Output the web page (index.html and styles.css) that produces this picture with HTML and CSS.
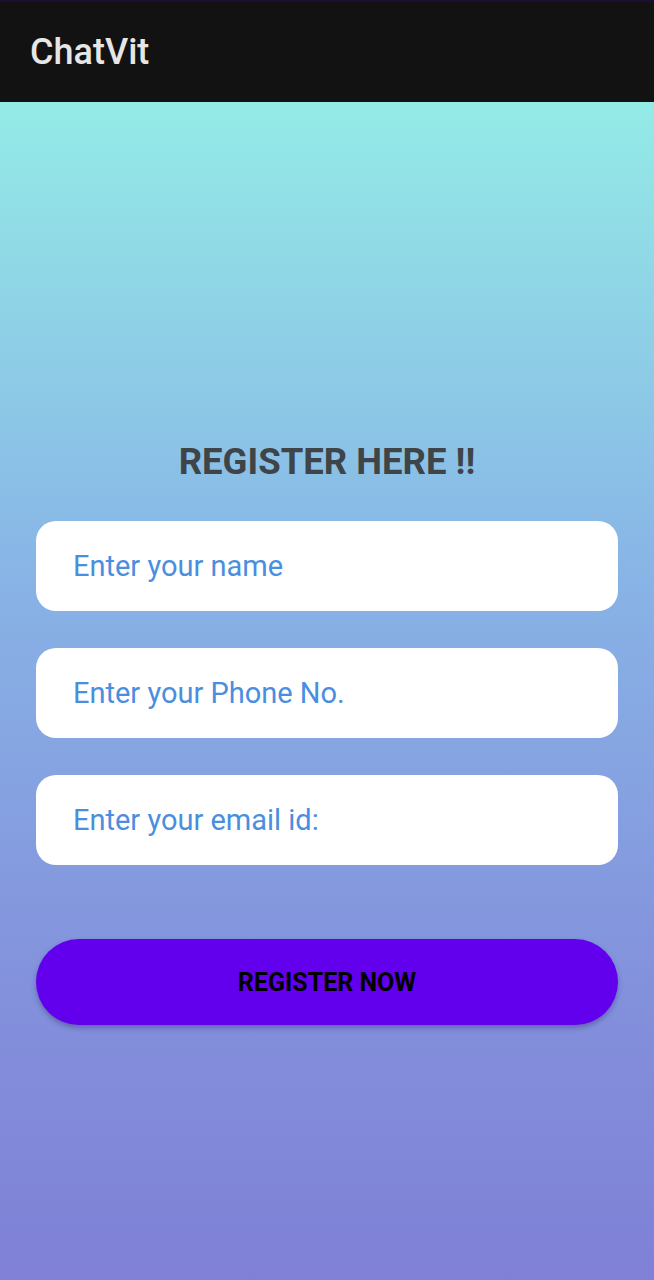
FILE: index.html
```html
<!DOCTYPE html>
<html>
<head>
<meta charset="utf-8">
<link rel="stylesheet" href="styles.css">
</head>
<body>
<div class="app">
  <header class="toolbar"><span class="title">ChatVit</span></header>
  <main class="content">
    <h1 class="heading">REGISTER HERE !!</h1>
    <div class="field"><span class="placeholder">Enter your name</span></div>
    <div class="field"><span class="placeholder">Enter your Phone No.</span></div>
    <div class="field"><span class="placeholder">Enter your email id:</span></div>
    <button class="btn">REGISTER NOW</button>
  </main>
</div>
</body>
</html>
```
FILE: styles.css
```css
html, body { margin: 0; padding: 0; }
body { font-family: Roboto, "Noto Sans", sans-serif; }
.app { width: 654px; height: 1280px; display: flex; flex-direction: column; }
.toolbar {
  height: 100px;
  border-top: 2px solid #1c0d35;
  background: #121212;
  display: flex;
  align-items: center;
  padding-left: 30px;
}
.title { color: #e6e6e6; font-size: 36px; font-weight: 500; }
.content {
  flex: 1;
  background: linear-gradient(to bottom, #94ebe6 0%, #88b4e6 40%, #8391dc 75%, #7f80d6 100%);
  display: flex;
  flex-direction: column;
  padding: 0 36px;
}
.heading {
  margin: 336px 0 0;
  text-align: center;
  font-size: 36.5px;
  font-weight: 700;
  color: #3e4447;
  line-height: 48px;
}
.field {
  margin-top: 37px;
  height: 90px;
  background: #fff;
  border-radius: 20px;
  display: flex;
  align-items: center;
  padding-left: 37px;
}
.field:first-of-type { margin-top: 35px; }
.placeholder { color: #4a8ee0; font-size: 29px; }
.btn {
  margin-top: 74px;
  height: 86px;
  border: none;
  border-radius: 43px;
  background: #6200ee;
  color: #000;
  font-family: Roboto, sans-serif;
  font-weight: 700;
  font-size: 25px;
  box-shadow: 0 3px 5px rgba(40, 30, 90, 0.35);
}
```
